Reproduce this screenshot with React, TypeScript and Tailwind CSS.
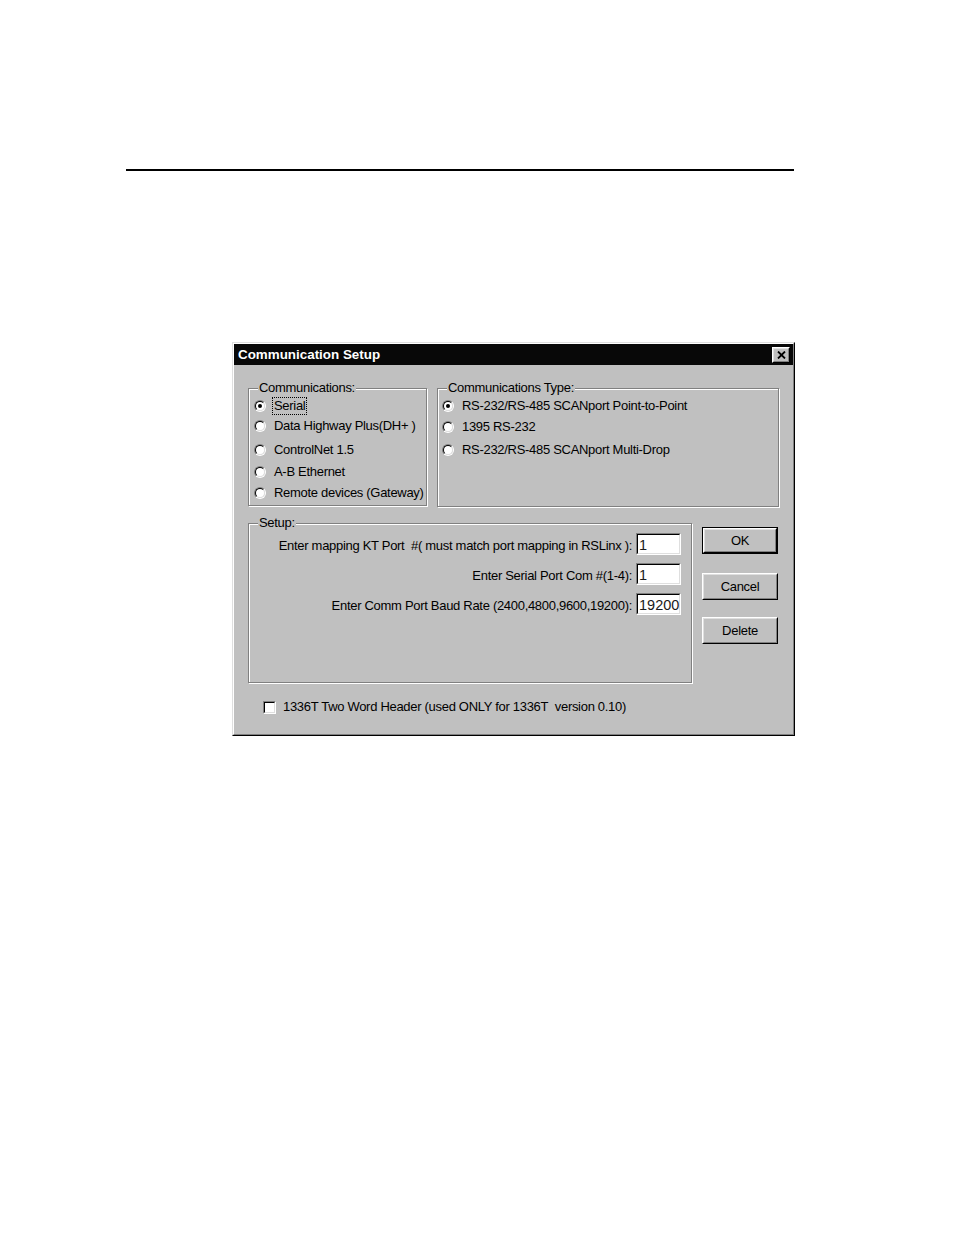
import React from "react";

function Radio({ checked }: { checked?: boolean }) {
  return (
    <div className="w-[12px] h-[12px] shrink-0 rounded-full border border-t-[#808080] border-l-[#808080] border-r-white border-b-white">
      <div className="w-full h-full rounded-full border border-t-black border-l-black border-r-[#dfdfdf] border-b-[#dfdfdf] bg-white flex items-center justify-center">
        {checked && <div className="w-[4px] h-[4px] rounded-full bg-black" />}
      </div>
    </div>
  );
}

function RadioRow({ label, checked, focus, cls }: { label: string; checked?: boolean; focus?: boolean; cls: string }) {
  return (
    <div className={"h-[20px] flex items-center gap-[6px] " + cls}>
      <Radio checked={checked} />
      <span
        className={
          "px-[1px] leading-[16px] whitespace-nowrap border " +
          (focus ? "border-dotted border-black" : "border-transparent")
        }
      >
        {label}
      </span>
    </div>
  );
}

function Group({ label, className, children }: { label: string; className: string; children?: React.ReactNode }) {
  return (
    <div className={"relative border border-[#808080] shadow-[inset_1px_1px_0_#fff,1px_1px_0_#fff] " + className}>
      <span className="absolute left-[9px] -top-[9px] bg-[#c0c0c0] px-[1px] leading-[15px] whitespace-nowrap">{label}</span>
      {children}
    </div>
  );
}

function Field({ value }: { value: string }) {
  return (
    <div className="w-[45px] h-[22px] shrink-0 border border-t-[#808080] border-l-[#808080] border-r-white border-b-white">
      <div className="w-full h-full border border-t-black border-l-black border-r-[#dfdfdf] border-b-[#dfdfdf] bg-white pl-[1px] leading-[20px] text-[14.5px] tracking-normal text-[#1a1a1a]">
        {value}
      </div>
    </div>
  );
}

function Button({ label, isDefault, cls }: { label: string; isDefault?: boolean; cls: string }) {
  const inner = (
    <div className="w-full h-full border border-t-white border-l-white border-r-black border-b-black">
      <div className="w-full h-full border border-t-[#dfdfdf] border-l-[#dfdfdf] border-r-[#808080] border-b-[#808080] flex items-center justify-center">
        {label}
      </div>
    </div>
  );
  return (
    <div className={"w-[76px] h-[27px] " + (isDefault ? "border border-black " : "") + cls}>{inner}</div>
  );
}

export default function App() {
  return (
    <div className="w-[954px] h-[1235px] bg-white pt-[169px] font-['Liberation_Sans',Arial,sans-serif] text-[13px] tracking-[-0.3px] text-black">
      <div className="ml-[126px] w-[668px] h-[2px] bg-black" />
      <div className="ml-[232px] mt-[171px] w-[563px] h-[394px] border border-t-[#dfdfdf] border-l-[#dfdfdf] border-r-black border-b-black bg-[#c0c0c0]">
        <div className="h-full border border-t-white border-l-white border-r-[#808080] border-b-[#808080]">
          <div className="h-[21px] bg-[#080808] flex items-center justify-between pl-[4px] pr-[3px]">
            <span className="text-white font-bold text-[13.4px] tracking-normal leading-[16px]">Communication Setup</span>
            <div className="w-[18px] h-[16px] border border-t-white border-l-white border-r-black border-b-black bg-[#c0c0c0]">
              <div className="w-full h-full border border-t-[#dfdfdf] border-l-[#dfdfdf] border-r-[#808080] border-b-[#808080] flex items-center justify-center">
                <svg width="9" height="8" viewBox="0 0 9 8">
                  <path d="M1 0.5 L8 7.5 M8 0.5 L1 7.5" stroke="black" strokeWidth="1.8" />
                </svg>
              </div>
            </div>
          </div>

          <div className="px-[14px] pt-[23px]">
            <div className="flex gap-[10px]">
              <Group label="Communications:" className="w-[179px] h-[118px] pt-[7px] pl-[5px]">
                <RadioRow label="Serial" checked focus cls="" />
                <RadioRow label="Data Highway Plus(DH+ )" cls="" />
                <RadioRow label="ControlNet 1.5" cls="mt-[4px]" />
                <RadioRow label="A-B Ethernet" cls="mt-[2px]" />
                <RadioRow label="Remote devices (Gateway)" cls="mt-[1px]" />
              </Group>
              <Group label="Communications Type:" className="w-[342px] h-[119px] pt-[7px] pl-[4px]">
                <RadioRow label="RS-232/RS-485 SCANport Point-to-Point" checked cls="" />
                <RadioRow label="1395 RS-232" cls="mt-[1px]" />
                <RadioRow label="RS-232/RS-485 SCANport Multi-Drop" cls="mt-[3px]" />
              </Group>
            </div>

            <div className="flex mt-[16px]">
              <Group label="Setup:" className="w-[444px] h-[160px] pt-[9px] pr-[10px]">
                <div className="flex flex-col gap-[8px]">
                  <div className="h-[22px] flex items-center justify-end gap-[4px]">
                    <span className="whitespace-nowrap leading-[16px] mt-[4px]">Enter mapping KT Port&nbsp; #( must match port mapping in RSLinx ):</span>
                    <Field value="1" />
                  </div>
                  <div className="h-[22px] flex items-center justify-end gap-[4px]">
                    <span className="whitespace-nowrap leading-[16px] mt-[4px]">Enter Serial Port Com #(1-4):</span>
                    <Field value="1" />
                  </div>
                  <div className="h-[22px] flex items-center justify-end gap-[4px]">
                    <span className="whitespace-nowrap leading-[16px] mt-[4px]">Enter Comm Port Baud Rate (2400,4800,9600,19200):</span>
                    <Field value="19200" />
                  </div>
                </div>
              </Group>
              <div className="ml-[10px] flex flex-col">
                <Button label="OK" isDefault cls="mt-[4px]" />
                <Button label="Cancel" cls="mt-[19px]" />
                <Button label="Delete" cls="mt-[17px]" />
              </div>
            </div>

            <div className="mt-[17px] pl-[15px] h-[14px] flex items-center gap-[7px]">
              <div className="w-[13px] h-[13px] shrink-0 border border-t-[#808080] border-l-[#808080] border-r-white border-b-white">
                <div className="w-full h-full border border-t-black border-l-black border-r-[#dfdfdf] border-b-[#dfdfdf] bg-white" />
              </div>
              <span className="whitespace-nowrap">1336T Two Word Header (used ONLY for 1336T&nbsp; version 0.10)</span>
            </div>
          </div>
        </div>
      </div>
    </div>
  );
}
